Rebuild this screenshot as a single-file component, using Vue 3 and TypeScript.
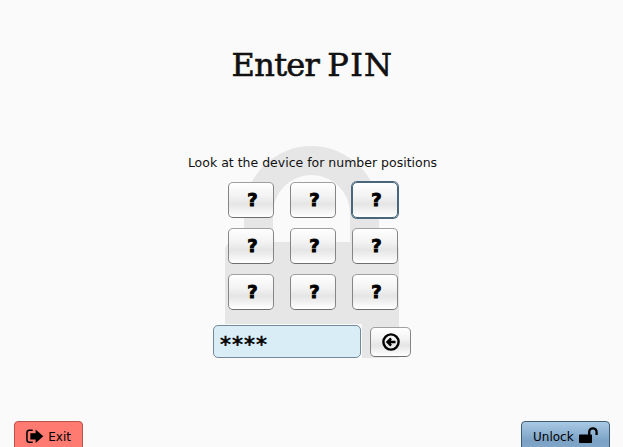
<script setup lang="ts">
import { ref } from 'vue'

const keys = [1, 2, 3, 4, 5, 6, 7, 8, 9]
const focused = ref<number>(3)
const entered = ref<string>('****')

function press(key: number): void {
  focused.value = key
  entered.value += '*'
}

function erase(): void {
  entered.value = entered.value.slice(0, -1)
}
</script>

<template>
  <main class="screen">
    <svg class="lock" width="174" height="212" viewBox="0 0 174 212">
      <path d="M19 110V67.500a67.500 67.500 0 0 1 135 0V110H125V67.500a38.500 38.500 0 0 0-77 0V110z" />
      <path d="M8 96H166a8 8 0 0 1 8 8V212H0V104a8 8 0 0 1 8-8z" />
    </svg>
    <h1><span class="word">Enter</span> <span class="caps">PIN</span></h1>
    <p class="hint">Look at the device for number positions</p>
    <div class="pad">
      <button
        v-for="key in keys"
        :key="key"
        class="btn key"
        :class="{ focused: focused === key }"
        @click="press(key)"
      ><span>?</span></button>
    </div>
    <div class="entry">
      <div class="field-wrap"><div class="field">{{ entered }}</div></div>
      <button class="btn back" @click="erase">
        <svg width="18" height="18" viewBox="0 0 18 18">
          <circle cx="9" cy="9" r="7.600" fill="none" stroke="#000" stroke-width="2.400" />
          <path d="M3.800 9 8.200 4.600 9.900 6.300 8.700 7.700H13.500V10.300H8.700L9.900 11.700 8.200 13.400z" />
        </svg>
      </button>
    </div>
    <footer>
      <button class="action exit">
        <svg width="19" height="15" viewBox="0 0 19 15">
          <path d="M7 1H3.500Q1 1 1 3.500V11Q1 13.500 3.500 13.500H7" fill="none" stroke="#000" stroke-width="1.600" />
          <path d="M4.500 4H10V.3L18 7.300 10 14.300V10.500H4.500z" />
        </svg>
        <span>Exit</span>
      </button>
      <button class="action unlock">
        <span>Unlock</span>
        <svg width="19" height="16" viewBox="0 0 19 16">
          <path d="M.8 7.500H12.200a.8.8 0 0 1 .8.8V15.200a.8.8 0 0 1-.8.8H.8a.8.8 0 0 1-.8-.8V8.300A.8.8 0 0 1 .8 7.500z" />
          <path d="M10.200 8V5a3.700 3.700 0 0 1 7.400 0V8" fill="none" stroke="#000" stroke-width="2.300" />
        </svg>
      </button>
    </footer>
  </main>
</template>

<style>
body {
  overflow: hidden;
  background: #fafafa;
}
</style>

<style scoped>
.screen {
  position: relative;
  box-sizing: border-box;
  width: 623px;
  height: 447px;
  display: flex;
  flex-direction: column;
  align-items: center;
  overflow: hidden;
  background: #fafafa;
  color: #111;
  font-family: "DejaVu Sans", sans-serif;
}
.lock {
  position: absolute;
  left: 225px;
  top: 146px;
  fill: #e6e6e6;
}
h1, .hint, .pad, .entry, footer {
  position: relative;
}
h1 {
  margin: 45px 0 0 2px;
  height: 40px;
  font: 400 32px/40px "DejaVu Serif", serif;
  word-spacing: -2px;
  white-space: nowrap;
  -webkit-text-stroke: 0.600px #111;
}
.word {
  letter-spacing: -0.700px;
}
.caps {
  letter-spacing: 1.300px;
}
.hint {
  margin: 70px 0 0 2px;
  font-size: 12.500px;
  line-height: 16px;
  white-space: nowrap;
}
.pad {
  margin: 11px 0 0 3px;
  display: grid;
  grid-template-columns: repeat(3, 46px);
  grid-auto-rows: 36px;
  gap: 10px 16px;
}
button {
  box-sizing: border-box;
  margin: 0;
  font-family: inherit;
  color: #000;
}
.btn {
  display: flex;
  align-items: center;
  justify-content: center;
  padding: 0;
  border: 1px solid #888;
  border-color: #a0a0a0 #858585 #6e6e6e #858585;
  border-radius: 5px;
  background: linear-gradient(#fff, #f2f2f2 40%, #e5e5e5 62%, #fff);
}
.key {
  font-size: 18px;
  font-weight: 700;
  line-height: 20px;
  -webkit-text-stroke: 0.900px #000;
}
.key span {
  padding-left: 3px;
}
.key.focused {
  border-color: #48677c;
  box-shadow: 0 0 0 1px #48677c;
}
.entry {
  margin: 14px 0 0 1px;
  display: flex;
  align-items: center;
  gap: 8px;
}
.field-wrap {
  padding: 1px 1px 1px 0;
  background: #fafafa;
}
.field {
  box-sizing: border-box;
  width: 148px;
  height: 33px;
  padding: 2px 6px 0;
  border: 1px solid #75899a;
  border-radius: 5px;
  background: #d9edf7;
  color: #000;
  font-size: 22px;
  letter-spacing: 1px;
  line-height: 33px;
  -webkit-text-stroke: 0.600px #000;
}
.back {
  width: 41px;
  height: 30px;
}
footer {
  width: 596px;
  margin-top: 62px;
  margin-left: 1px;
  display: flex;
  justify-content: space-between;
}
.action {
  display: flex;
  align-items: center;
  height: 31px;
  padding: 0 11px;
  border: 1px solid;
  border-radius: 4px;
  font-size: 12px;
}
.exit {
  width: 69px;
  gap: 4px;
  border-color: #b9544d;
  background: #ff7b72;
}
.exit svg {
  margin-top: -1px;
}
.unlock {
  width: 89px;
  gap: 5px;
  border-color: #3d5c73;
  background: linear-gradient(#a9c9e4, #7ba2c5 65%, #82a8ca);
}
.unlock svg {
  flex: none;
  margin-top: -3px;
}
</style>
